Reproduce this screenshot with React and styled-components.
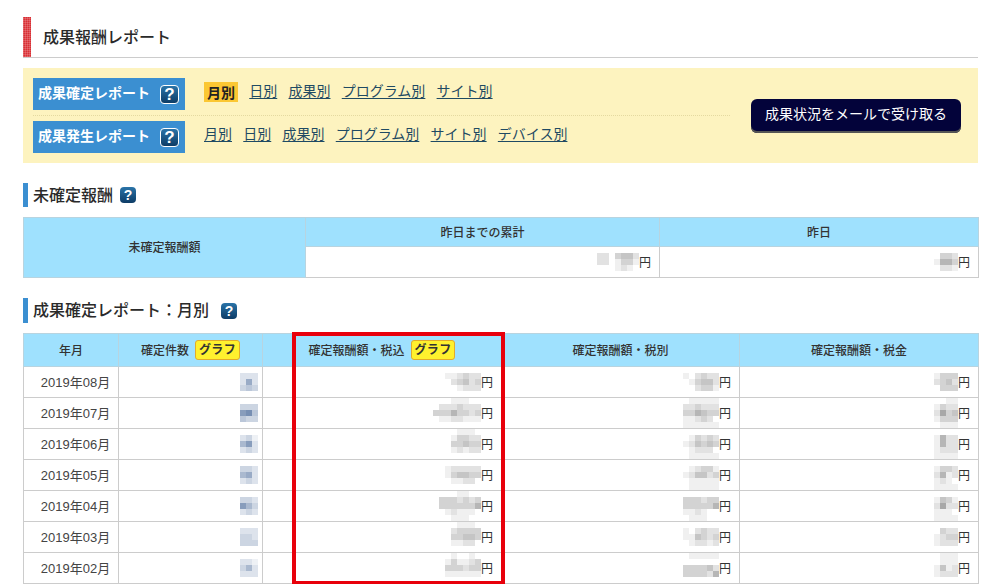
import React from 'react';
import styled, { createGlobalStyle } from 'styled-components';

const Global = createGlobalStyle`
  html, body { margin: 0; padding: 0; background: #fff; height: 584px; overflow: hidden; }
  body { font-family: "Noto Sans CJK JP", "Liberation Sans", sans-serif; color: #333; }
`;
const Page = styled.div`padding: 17px 22px 0 23px; width: 955px;`;
const Title = styled.h1`
  margin: 0; height: 41px; box-sizing: border-box; display: flex; align-items: center;
  padding: 0 0 3px 20px; font-size: 16px; font-weight: 500; color: #2a2a2a;
  border-bottom: 1px solid #ccc;
  background:
    repeating-linear-gradient(0deg, rgba(255,255,255,.16) 0 1px, transparent 1px 2px) 0 0 / 8px 100% no-repeat,
    repeating-linear-gradient(90deg, rgba(255,255,255,.16) 0 1px, transparent 1px 2px) 0 0 / 8px 100% no-repeat,
    linear-gradient(#d92f34, #d92f34) 0 0 / 8px 100% no-repeat;
`;
const Panel = styled.div`
  margin-top: 10px; height: 95px; box-sizing: border-box; background: #fdf3bf;
  padding: 10px 17px 10px 10px; display: flex; align-items: center; gap: 21px;
`;
const NavColumn = styled.div`width: 697px; display: flex; flex-direction: column;`;
const NavRow = styled.div`
  display: flex; height: 32px; align-items: flex-start;
  & + & { margin-top: 5px; padding-top: 5px; border-top: 1px dotted #e4d9a0; height: 32px; }
`;
const NavLabel = styled.div`
  width: 152px; height: 32px; flex: none; box-sizing: border-box; background: #3b8fd1;
  color: #fff; font-size: 14px; font-weight: 700; display: flex; align-items: center;
  justify-content: space-between; padding: 0 6px 0 5px;
`;
const LabelText = styled.span`margin-bottom: 5px;`;
const Links = styled.div`display: flex; gap: 11.25px; margin: 2px 0 0 19px; line-height: 20px; font-size: 14px;`;
const NavLink = styled.a`color: #1f4a63; text-decoration: underline; text-underline-offset: 2px;`;
const Active = styled.span`
  background: #fbc733; color: #222; font-weight: 700; padding: 2px 3px 0; height: 20px; line-height: 16px;
  box-sizing: border-box; align-self: flex-start; margin-top: 2px;
`;
const MailButton = styled.button`
  width: 210px; height: 34px; flex: none; border: 0; border-radius: 6px; padding: 0 0 5px;
  background: #03033a; color: #fff; font: 400 14px "Noto Sans CJK JP", sans-serif;
  box-shadow: inset 0 -2px 0 #555;
`;
const Help = styled.span`
  width: ${p => p.$s}px; height: ${p => p.$s}px; box-sizing: border-box; flex: none;
  border-radius: 4px; display: inline-flex; align-items: center; justify-content: center;
  background: linear-gradient(#2a74a8, #0d3c66); color: #fff;
  font: 700 ${p => p.$s - 2}px/1 "Liberation Sans", sans-serif;
  ${p => p.$framed && 'border: 1.5px solid #fff;'}
`;
const Heading = styled.h2`
  margin: ${p => p.$top}px 0 10px; height: ${p => p.$h}px; box-sizing: border-box; display: flex; align-items: center;
  border-left: 5px solid #3b8fd1; padding-left: 5px; font-size: 16px; font-weight: 500; color: #2a2a2a;
  gap: ${p => p.$gap}px;
`;
const HeadingText = styled.span`margin-bottom: 3px;`;
const Table = styled.table`
  width: 955px; table-layout: fixed; border-collapse: collapse; font-size: 12px;
`;
const Th = styled.th`
  background: #9fe1fe; border: 1px solid #b8d4e0; font-weight: 500; color: #333; padding: 0 0 2px; font-size: 12px;
  height: ${p => p.$h}px;
`;
const HeadCell = styled.div`display: flex; justify-content: center; align-items: center; gap: 6px;`;
const DateCell = styled.td`
  border: 1px solid #ccc; padding: 0 0 2px 9px; height: 28px; text-align: center;
  font-family: "Liberation Sans", "Noto Sans CJK JP", sans-serif; font-size: 13px; color: #444;
`;
const Td = styled.td`
  border: 1px solid #ccc; padding: 0; height: ${p => p.$h || 30}px; text-align: right;
`;
const Value = styled.div`
  display: flex; justify-content: flex-end; align-items: center; padding-right: ${p => p.$pad ?? 8}px;
  font-size: 12px; color: #333;
`;
const Yen = styled.span`margin-bottom: 2px;`;
const GraphTag = styled.span`
  display: block; padding: 0 3px; height: 20px; box-sizing: border-box; line-height: 16px; margin-top: 2px;
  background: #fff12e; border: 1px solid #e2ab2c; border-radius: 3px; font-weight: 700; font-size: 12px; color: #333;
  letter-spacing: .3px;
`;
const MosaicSvg = styled.svg`flex: none; display: block; filter: blur(.6px);`;
const Wrap = styled.div`position: relative;`;
const RedFrame = styled.div`
  position: absolute; left: 269px; top: -1px; width: 213px; height: 253px;
  box-sizing: border-box; border: 4px solid #e8000b; pointer-events: none;
`;

const Mosaic = ({ rows, rgb = '110,110,110' }) => {
  const w = rows[0].length * 6;
  return (
    <MosaicSvg width={w} height={rows.length * 6} aria-hidden="true">
      {rows.flatMap((r, y) => [...r].map((d, x) => (
        <rect key={`${x}-${y}`} x={x * 6} y={y * 6} width="6" height="6" fill={`rgba(${rgb},${+d * 0.1})`} />
      )))}
    </MosaicSvg>
  );
};
const BLUE = '85,115,160';
const data = [
  { m: '2019年08月', c: ['000', '222', '262', '343', '000'], a: ['0000000', '0112322', '0023423', '0001222', '0000000'], b: ['000000', '102322', '013442', '002331', '000000'], d: ['0000', '1333', '2342', '0333', '0000'] },
  { m: '2019年07月', c: ['000', '333', '784', '433', '000'], a: ['00011100', '02223222', '33353323', '01122111', '00000000'], b: ['011111', '223222', '335433', '112320', '111111'], d: ['0011', '1322', '2634', '1333', '0111'] },
  { m: '2019年06月', c: ['000', '231', '572', '232', '000'], a: ['0001110', '0013322', '0033433', '0012122', '0000000'], b: ['000000', '013232', '124343', '012220', '011111'], d: ['0000', '1522', '1522', '1222', '1111'] },
  { m: '2019年05月', c: ['000', '332', '562', '232', '000'], a: ['0000000', '0122222', '0134433', '0011220', '0000000'], b: ['000000', '012331', '124423', '011111', '011111'], d: ['0000', '1332', '2512', '1210', '1111'] },
  { m: '2019年04月', c: ['000', '332', '753', '232', '000'], a: ['0001100', '3332323', '3333335', '0121110', '0011100'], b: ['000000', '333233', '333335', '112100', '011100'], d: ['0000', '1431', '2622', '1110', '1111'] },
  { m: '2019年03月', c: ['000', '222', '332', '333', '000'], a: ['0001110', '0023333', '0033443', '0011220', '0000000'], b: ['000000', '102322', '114323', '012212', '000000'], d: ['0000', '0322', '1233', '1222', '0000'] },
  { m: '2019年02月', c: ['000', '221', '352', '222', '000'], a: ['0010010', '0131123', '0333233', '0111111', '0000000'], b: ['011111', '000000', '333342', '333325', '000000'], d: ['0111', '0111', '1412', '1222', '0000'] },
];

export default function App() {
  return (
    <Page>
      <Global />
      <Title>成果報酬レポート</Title>
      <Panel>
        <NavColumn>
          <NavRow>
            <NavLabel><LabelText>成果確定レポート</LabelText><Help $s={19} $framed>?</Help></NavLabel>
            <Links>
              <Active>月別</Active>
              {['日別', '成果別', 'プログラム別', 'サイト別'].map(t => <NavLink key={t} href="#">{t}</NavLink>)}
            </Links>
          </NavRow>
          <NavRow>
            <NavLabel><LabelText>成果発生レポート</LabelText><Help $s={19} $framed>?</Help></NavLabel>
            <Links>
              {['月別', '日別', '成果別', 'プログラム別', 'サイト別', 'デバイス別'].map(t => <NavLink key={t} href="#">{t}</NavLink>)}
            </Links>
          </NavRow>
        </NavColumn>
        <MailButton>成果状況をメールで受け取る</MailButton>
      </Panel>

      <Heading $top={20} $h={24} $gap={7}><HeadingText>未確定報酬</HeadingText><Help $s={16}>?</Help></Heading>
      <Table>
        <colgroup><col width="282" /><col width="354" /><col width="319" /></colgroup>
        <tbody>
          <tr>
            <Th rowSpan={2}>未確定報酬額</Th>
            <Th $h={26}>昨日までの累計</Th>
            <Th>昨日</Th>
          </tr>
          <tr>
            <Td $h={30}><Value><Mosaic rows={['2203442', '2201331', '0001210']} /><Yen>円</Yen></Value></Td>
            <Td $h={30}><Value><Mosaic rows={['0332', '1553', '0221']} /><Yen>円</Yen></Value></Td>
          </tr>
        </tbody>
      </Table>

      <Heading $top={20} $h={25} $gap={12}><HeadingText>成果確定レポート：月別</HeadingText><Help $s={16}>?</Help></Heading>
      <Wrap>
        <Table>
          <colgroup><col width="95" /><col width="144" /><col width="239" /><col width="238" /><col width="239" /></colgroup>
          <thead>
            <tr>
              <Th $h={30}>年月</Th>
              <Th><HeadCell>確定件数<GraphTag>グラフ</GraphTag></HeadCell></Th>
              <Th><HeadCell>確定報酬額・税込<GraphTag>グラフ</GraphTag></HeadCell></Th>
              <Th>確定報酬額・税別</Th>
              <Th>確定報酬額・税金</Th>
            </tr>
          </thead>
          <tbody>
            {data.map(r => (
              <tr key={r.m}>
                <DateCell>{r.m}</DateCell>
                <Td><Value $pad={4}><Mosaic rows={r.c} rgb={BLUE} /></Value></Td>
                <Td><Value><Mosaic rows={r.a} /><Yen>円</Yen></Value></Td>
                <Td><Value><Mosaic rows={r.b} /><Yen>円</Yen></Value></Td>
                <Td><Value><Mosaic rows={r.d} /><Yen>円</Yen></Value></Td>
              </tr>
            ))}
          </tbody>
        </Table>
        <RedFrame />
      </Wrap>
    </Page>
  );
}
